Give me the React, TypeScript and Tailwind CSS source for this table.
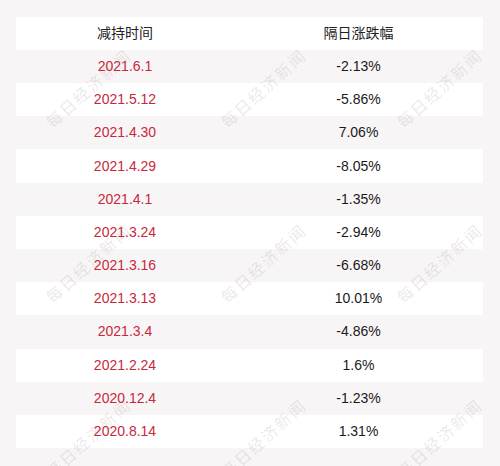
import React from 'react';

const rows: [string, string][] = [
  ['2021.6.1', '-2.13%'],
  ['2021.5.12', '-5.86%'],
  ['2021.4.30', '7.06%'],
  ['2021.4.29', '-8.05%'],
  ['2021.4.1', '-1.35%'],
  ['2021.3.24', '-2.94%'],
  ['2021.3.16', '-6.68%'],
  ['2021.3.13', '10.01%'],
  ['2021.3.4', '-4.86%'],
  ['2021.2.24', '1.6%'],
  ['2020.12.4', '-1.23%'],
  ['2020.8.14', '1.31%'],
];

const marks: [number, number][] = [];
for (const y of [88, 263, 438]) {
  for (const x of [88, 263, 439]) marks.push([x, y]);
}

export default function App() {
  return (
    <div
      className="relative h-[466px] w-[500px] overflow-hidden bg-[#f8f5f6] pt-[16.7px]"
      style={{ fontFamily: '"Liberation Sans", "Noto Sans CJK SC", sans-serif' }}
    >
      <div className="ml-4 w-[467px] text-[14px]">
        <div className="flex h-[33.2px] items-center bg-white text-[#222]">
          <div className="w-[218px] text-center">减持时间</div>
          <div className="flex-1 text-center">隔日涨跌幅</div>
        </div>
        {rows.map(([date, pct], i) => (
          <div
            key={date}
            className={`flex h-[33.2px] items-center ${i % 2 === 1 ? 'bg-white' : 'bg-[#f8f5f6]'}`}
          >
            <div className="w-[218px] text-center text-[#c8283c]">{date}</div>
            <div className="flex-1 text-center text-[#1a1a1a]">{pct}</div>
          </div>
        ))}
      </div>

      {/* watermark */}
      {marks.map(([x, y]) => (
        <div
          key={`${x}-${y}`}
          className="pointer-events-none absolute -translate-x-1/2 -translate-y-1/2 -rotate-[42deg] whitespace-nowrap text-[16px] tracking-[2px] text-[rgba(120,110,110,0.16)]"
          style={{ left: x, top: y, fontFamily: '"Noto Sans CJK SC", sans-serif' }}
        >
          每日经济新闻
        </div>
      ))}
    </div>
  );
}
